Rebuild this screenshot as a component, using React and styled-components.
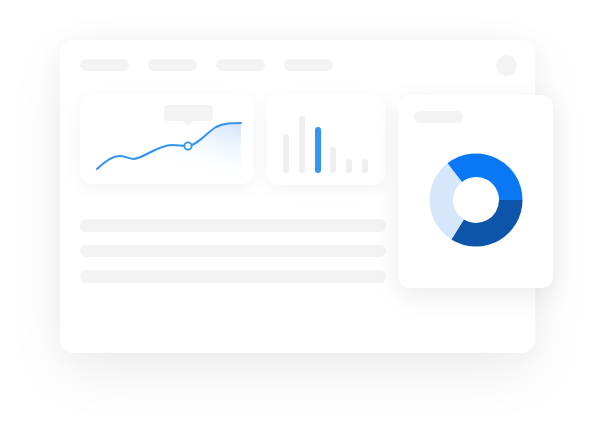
import styled, { createGlobalStyle } from 'styled-components'

const GlobalStyle = createGlobalStyle`
  html, body {
    margin: 0;
    padding: 0;
    background: #ffffff;
    font-family: "Inter", "Liberation Sans", sans-serif;
  }
`

const Stage = styled.div`
  width: 614px;
  height: 434px;
  padding: 40px 0 0 60px;
  box-sizing: border-box;
  overflow: hidden;
`

const Window = styled.div`
  width: 475px;
  height: 313px;
  box-sizing: border-box;
  padding: 19px 18px 0 20px;
  background: #ffffff;
  border-radius: 14px;
  box-shadow: 0 20px 55px rgba(0, 0, 0, 0.07), 0 0 30px rgba(0, 0, 0, 0.03);
`

const NavBar = styled.div`
  display: flex;
  align-items: center;
  gap: 19px;
  height: 12px;
`

const Pill = styled.div`
  width: ${p => p.$w || 49}px;
  height: 12px;
  border-radius: 6px;
  background: #f3f3f3;
  flex-shrink: 0;
`

const Avatar = styled.div`
  margin-left: auto;
  width: 21px;
  height: 21px;
  border-radius: 50%;
  background: #f3f3f3;
`

const Content = styled.div`
  display: flex;
  align-items: flex-start;
  gap: 13px;
  margin-top: 24px;
  width: 473px;
`

const LeftColumn = styled.div`
  display: flex;
  flex-direction: column;
  width: 305px;
`

const CardRow = styled.div`
  display: flex;
  gap: 14px;
`

const Card = styled.div`
  position: relative;
  width: ${p => p.$w}px;
  height: ${p => p.$h}px;
  box-sizing: border-box;
  background: #ffffff;
  border-radius: ${p => p.$r || 11}px;
  box-shadow: 0 4px 18px rgba(0, 0, 0, 0.05);
  flex-shrink: 0;
`

const Tooltip = styled.div`
  position: absolute;
  left: 84px;
  top: 10px;
  width: 49px;
  height: 16px;
  border-radius: 4px;
  background: #f3f3f3;

  &::after {
    content: '';
    position: absolute;
    left: 19px;
    top: 16px;
    border-left: 5px solid transparent;
    border-right: 5px solid transparent;
    border-top: 5px solid #f3f3f3;
  }
`

const ChartSvg = styled.svg`
  display: block;
`

const Bars = styled.div`
  display: flex;
  align-items: flex-end;
  gap: 9.8px;
  height: 100%;
  box-sizing: border-box;
  padding: 0 0 12px 16px;
`

const Bar = styled.div`
  width: 6px;
  height: ${p => p.$h}px;
  border-radius: 3px;
  background: ${p => (p.$active ? '#3396f0' : '#efefef')};
`

const TextLines = styled.div`
  display: flex;
  flex-direction: column;
  gap: 13px;
  margin-top: 34px;
`

const TextLine = styled.div`
  width: 306px;
  height: 12.5px;
  border-radius: 6px;
  background: #f3f3f3;
`

const DonutCard = styled(Card)`
  padding: 16px 0 0 16px;
  box-shadow: 0 8px 28px rgba(0, 0, 0, 0.08);
`

const DonutWrap = styled.div`
  margin: 30px 0 0 -16px;
  display: flex;
  justify-content: center;
`

const linePath =
  'M17 74 C25 66 33 61 40 61 C46 61 49 64 54 64 C64 63 78 50 92 50 C98 50 102 51 108 51 C118 50 126 38 136 32 C144 28 152 28 161 28'

function LineChart() {
  return (
    <ChartSvg width="173" height="89" viewBox="0 0 173 89">
      <defs>
        <linearGradient id="area" x1="155" y1="28" x2="140" y2="86" gradientUnits="userSpaceOnUse">
          <stop offset="0" stopColor="#d2e5fb" />
          <stop offset="1" stopColor="#ffffff" stopOpacity="0" />
        </linearGradient>
      </defs>
      <path d={linePath + ' L161 86 L17 86 Z'} fill="url(#area)" />
      <path d={linePath} fill="none" stroke="#3193ee" strokeWidth="2" strokeLinecap="round" />
      <circle cx="108" cy="51" r="3.6" fill="#ffffff" stroke="#3193ee" strokeWidth="1.8" />
    </ChartSvg>
  )
}

function sector(cx, cy, r1, r2, a0, a1) {
  const rad = a => (a * Math.PI) / 180
  const p = (r, a) => [cx + r * Math.cos(rad(a)), cy + r * Math.sin(rad(a))]
  const large = a1 - a0 > 180 ? 1 : 0
  const [x0, y0] = p(r2, a0)
  const [x1, y1] = p(r2, a1)
  const [x2, y2] = p(r1, a1)
  const [x3, y3] = p(r1, a0)
  return `M${x0} ${y0} A${r2} ${r2} 0 ${large} 1 ${x1} ${y1} L${x2} ${y2} A${r1} ${r1} 0 ${large} 0 ${x3} ${y3} Z`
}

const slices = [
  { from: -128, to: 0, color: '#0a78f5' },
  { from: 0, to: 122, color: '#0d55ab' },
  { from: 122, to: 232, color: '#d7e7fb' },
]

function Donut() {
  return (
    <ChartSvg width="94" height="94" viewBox="0 0 94 94">
      {slices.map(s => (
        <path key={s.from} d={sector(47, 47, 23, 46.5, s.from, s.to)} fill={s.color} />
      ))}
    </ChartSvg>
  )
}

const barHeights = [39, 57, 46, 26, 14, 14]

export default function App() {
  return (
    <>
      <GlobalStyle />
      <Stage>
        <Window>
          <NavBar>
            <Pill />
            <Pill />
            <Pill />
            <Pill />
            <Avatar />
          </NavBar>
          <Content>
            <LeftColumn>
              <CardRow>
                <Card $w={173} $h={89}>
                  <Tooltip />
                  <LineChart />
                </Card>
                <Card $w={118} $h={90}>
                  <Bars>
                    {barHeights.map((h, i) => (
                      <Bar key={i} $h={h} $active={i === 2} />
                    ))}
                  </Bars>
                </Card>
              </CardRow>
              <TextLines>
                <TextLine />
                <TextLine />
                <TextLine />
              </TextLines>
            </LeftColumn>
            <DonutCard $w={155} $h={193} $r={12}>
              <Pill />
              <DonutWrap>
                <Donut />
              </DonutWrap>
            </DonutCard>
          </Content>
        </Window>
      </Stage>
    </>
  )
}
